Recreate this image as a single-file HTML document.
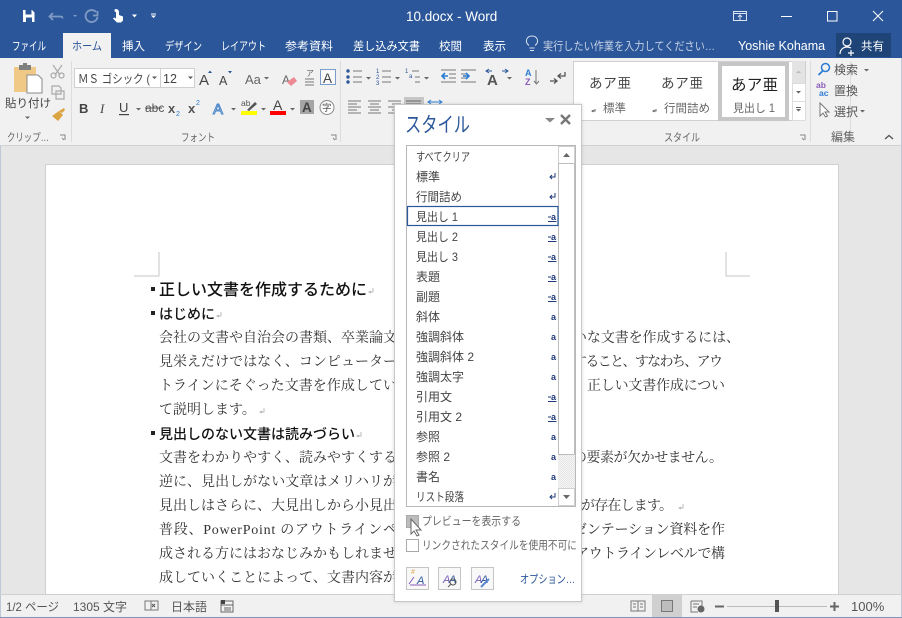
<!DOCTYPE html>
<html lang="ja"><head><meta charset="utf-8"><title>10.docx - Word</title>
<style>
html,body{margin:0;padding:0;width:902px;height:618px;overflow:hidden;background:#e6e6e6}
svg{display:block;font-family:"Liberation Sans","Noto Sans CJK JP",sans-serif}
.tab{font-size:11.5px;fill:#fff}
.r{font-size:12px;fill:#555}
.g{font-size:11px;fill:#666}
.d{font-size:14px;fill:#333;font-family:"Noto Serif CJK SC",serif}
.m{font-size:14px;fill:#333;font-family:"Liberation Serif","Noto Serif CJK SC",serif}
.h{font-size:14px;fill:#111;font-weight:700;font-family:"Noto Sans CJK JP",sans-serif}
.i{font-size:12px;fill:#444}
.s{font-size:12px;fill:#555}
</style></head><body>
<svg width="902" height="618" viewBox="0 0 902 618" xmlns="http://www.w3.org/2000/svg">
<defs>
<pattern id="hatch" width="2" height="2" patternUnits="userSpaceOnUse"><rect width="2" height="2" fill="#f6f6f6"/><rect width="1" height="1" fill="#e4e4e4"/><rect x="1" y="1" width="1" height="1" fill="#e4e4e4"/></pattern>
<filter id="sh" x="-10%" y="-10%" width="120%" height="120%"><feGaussianBlur stdDeviation="1.5"/></filter>
</defs>
<!-- title bar -->
<rect width="902" height="58" fill="#2b579a"/>
<g fill="none" stroke="#fff" stroke-width="1.4">
<path d="M23 10h9l2.500 2.500V22H23z" fill="#fff" stroke="none"/>
<rect x="25.500" y="10" width="6" height="4.500" fill="#2b579a" stroke="none"/>
<rect x="26" y="17.500" width="6" height="4.500" fill="#2b579a" stroke="none"/>
</g>
<g fill="none" stroke="#7f9ac4" stroke-width="1.800">
<path d="M53 13l-3.500 3.500 3.500 3.500M50 16.500h8c3 0 4.500-.5 4.500 2"/>
<path d="M97.500 11v4.500h-4.500M96 12a6 6 0 1 0 1.500 5"/>
</g>
<path d="M132 14.500h5l-2.500 3zM151 13.500h5v1h-5zM151 15.500h5l-2.500 2.500z" fill="#fff"/>
<path d="M73 15h4l-2 2z" fill="#7f9ac4"/>
<path d="M116 9a3 3 0 0 1 3 3v3l4 1.500v4l-2 2h-4l-4-4 1-1 2 1V12a1 1 0 0 1 0-3z" fill="#fff"/>
<text x="406" y="21" font-size="13.500" fill="#fff">10.docx - Word</text>
<g fill="none" stroke="#dbe3f0" stroke-width="1">
<rect x="733.500" y="11.500" width="13" height="9"/><path d="M733 13.500h14M740 20v-5M738 17l2-2 2 2"/>
<path d="M781 16.500h11" stroke="#fff"/>
<rect x="827.500" y="11.500" width="9.500" height="9.500" stroke="#fff"/>
<path d="M873 11l10 10M883 11l-10 10" stroke="#fff"/>
</g>
<!-- tabs -->
<rect x="63" y="33" width="48" height="26" fill="#f1f1f1"/>
<g lengthAdjust="spacingAndGlyphs">
<text class="tab" x="12" y="50" textLength="34" lengthAdjust="spacingAndGlyphs">ファイル</text>
<text class="tab" x="72" y="50" style="fill:#2b579a" textLength="30" lengthAdjust="spacingAndGlyphs">ホーム</text>
<text class="tab" x="122" y="50">挿入</text>
<text class="tab" x="165" y="50" textLength="37" lengthAdjust="spacingAndGlyphs">デザイン</text>
<text class="tab" x="221" y="50" textLength="45" lengthAdjust="spacingAndGlyphs">レイアウト</text>
<text class="tab" x="285" y="50" textLength="48" lengthAdjust="spacingAndGlyphs">参考資料</text>
<text class="tab" x="353" y="50" textLength="67" lengthAdjust="spacingAndGlyphs">差し込み文書</text>
<text class="tab" x="439" y="50">校閲</text>
<text class="tab" x="483" y="50">表示</text>
</g>
<path d="M530 50.500h4M529.500 48h5M529 45.500c-5-4-2-9.500 3-9.500s8 5.500 3 9.500" fill="none" stroke="#dbe3f0" stroke-width="1"/>
<text x="543" y="50" font-size="11.500" fill="#c4d0e4" textLength="172" lengthAdjust="spacingAndGlyphs">実行したい作業を入力してください…</text>
<text x="738" y="50" font-size="12.500" fill="#fff">Yoshie Kohama</text>
<rect x="836" y="33" width="55" height="24" fill="#1f4478"/>
<circle cx="847" cy="42" r="4" fill="none" stroke="#fff" stroke-width="1.200"/>
<path d="M840 54c0-4 3-7 7-7 2 0 3 .5 4 1M851 50v6M848 53h6" fill="none" stroke="#fff" stroke-width="1.200"/>
<text x="861" y="50" font-size="11.500" fill="#fff">共有</text>
<!-- ribbon -->
<rect x="0" y="58" width="902" height="88" fill="#f1f1f1"/>
<rect x="0" y="145" width="902" height="1" fill="#d2d2d2"/>
<rect x="0" y="146" width="902" height="448" fill="#e6e6e6"/>
<g fill="#dcdcdc"><rect x="71" y="61" width="1" height="81"/><rect x="340" y="61" width="1" height="81"/><rect x="810" y="61" width="1" height="81"/><rect x="850" y="61" width="1" height="81"/></g>
<!-- paste -->
<path d="M14 67h22v25H14z" fill="#f0c987"/>
<rect x="19" y="65" width="12" height="5" fill="#7f7f7f"/><rect x="23" y="63" width="4" height="3" fill="#7f7f7f"/>
<path d="M27 75h11l4 4v14H27z" fill="#fff" stroke="#8a8a8a"/>
<text x="5" y="107" font-size="11.500" fill="#444">貼り付け</text>
<path d="M25 116.500h5l-2.500 2.500z" fill="#666"/>
<g fill="none" stroke="#aaa" stroke-width="1.200"><path d="M53 65l7 10M62 65l-7 10"/><circle cx="53.500" cy="75.500" r="2.500"/><circle cx="61.500" cy="75.500" r="2.500"/>
<path d="M52 86h7l2 2v6h-9zM56 91h8v8h-8z"/></g>
<path d="M52 116l7-5 4 4-5 6zM59 111l5-3 1 2-3 3z" fill="#d9a441"/>
<text class="g" x="7" y="141" textLength="42" lengthAdjust="spacingAndGlyphs">クリップ…</text>
<path d="M60 135h5v5M62 138l2 2" fill="none" stroke="#888"/>
<text class="g" x="181" y="141" textLength="34" lengthAdjust="spacingAndGlyphs">フォント</text>
<path d="M331 135h5v5M333 138l2 2" fill="none" stroke="#888"/>
<text class="g" x="664" y="141" textLength="36" lengthAdjust="spacingAndGlyphs">スタイル</text>
<path d="M800 135h5v5M802 138l2 2" fill="none" stroke="#888"/>
<text class="g" x="831" y="141" style="font-size:12px">編集</text>
<path d="M885 139l4-3.500 4 3.500" fill="none" stroke="#555" stroke-width="1.400"/>
<!-- font row 1 -->
<rect x="74.500" y="68.500" width="86" height="19" fill="#fff" stroke="#d0d0d0"/>
<rect x="160.500" y="68.500" width="34" height="19" fill="#fff" stroke="#d0d0d0"/>
<text x="78" y="83" font-size="12" fill="#444" textLength="72" lengthAdjust="spacingAndGlyphs">ＭＳ ゴシック (</text>
<text x="163" y="83" font-size="12.500" fill="#444">12</text>
<path d="M152 76.500h5l-2.500 2.500zM188 76.500h5l-2.500 2.500z" fill="#555"/>
<text x="199" y="85" font-size="15" fill="#444">A</text>
<path d="M208 73h4l-2-2.500z" fill="#2b579a"/>
<text x="219" y="85" font-size="12.500" fill="#444">A</text>
<path d="M228 71h4l-2 2.500z" fill="#2b579a"/>
<text x="245" y="84" font-size="13" fill="#666">Aa</text>
<path d="M264 77h5l-2.500 2.500z" fill="#666"/>
<text x="282" y="84" font-size="12" fill="#666">A</text>
<path d="M287 82l7-5 3 4-6 5z" fill="#ee8a94"/>
<text x="306" y="76" font-size="8" fill="#666">ア</text>
<path d="M305 79h9M305 82h9M305 85h9" stroke="#777"/>
<rect x="320.500" y="69.500" width="15" height="15" fill="#f9f9f9" stroke="#7a9cc6"/>
<text x="323" y="83" font-size="13.500" fill="#444">A</text>
<!-- font row 2 -->
<text x="79" y="113" font-size="13" font-weight="700" fill="#444">B</text>
<text x="100" y="113" font-size="13" font-style="italic" font-family="Liberation Serif" fill="#444">I</text>
<text x="119" y="112" font-size="13" fill="#444">U</text><rect x="119" y="114" width="10" height="1.200" fill="#444"/>
<path d="M136 108h5l-2.500 2.500z" fill="#666"/>
<text x="145" y="112" font-size="12" fill="#555">abc</text><rect x="145" y="107.500" width="17" height="1" fill="#555"/>
<text x="168" y="113" font-size="13" font-weight="700" fill="#555">x</text><text x="176" y="116" font-size="7" fill="#2b7cd3">2</text>
<text x="188" y="113" font-size="13" font-weight="700" fill="#555">x</text><text x="196" y="105" font-size="7" fill="#2b7cd3">2</text>
<text x="213" y="114" font-size="15" fill="#fff" stroke="#4a86c8" stroke-width="1">A</text>
<path d="M231 108h5l-2.500 2.500z" fill="#666"/>
<text x="241" y="106" font-size="8.500" fill="#555">ab</text>
<path d="M247 110l8-8 2 2-8 7z" fill="#555"/>
<rect x="241" y="111" width="16" height="4" fill="#ffff00"/>
<path d="M261 108h5l-2.500 2.500z" fill="#666"/>
<text x="273" y="110" font-size="14" fill="#444">A</text>
<rect x="270" y="111" width="16" height="4" fill="#f00"/>
<path d="M290 108h5l-2.500 2.500z" fill="#666"/>
<rect x="300" y="100" width="14" height="14" fill="#a5a5a5"/>
<text x="302" y="112" font-size="13.500" font-weight="700" fill="#444">A</text>
<circle cx="327" cy="107.500" r="7" fill="#fbfbfb" stroke="#888"/>
<text x="322" y="111" font-size="9.500" fill="#555">字</text>
<!-- para row 1 -->
<g fill="#2b579a"><circle cx="348" cy="71" r="1.700"/><circle cx="348" cy="77" r="1.700"/><circle cx="348" cy="82" r="1.700"/></g>
<path d="M353 71h9M353 77h9M353 82h9M382 71h9M382 77h9M382 82h9M412 71h7M415 77h5M415 82h5M441 70h15M449 74h7M449 78h7M441 82h15M461 70h15M461 74h7M461 78h7M461 82h15" stroke="#777" fill="none"/>
<g font-size="6" fill="#2b579a"><text x="376" y="73">1</text><text x="376" y="79">2</text><text x="376" y="85">3</text><text x="405" y="73">1</text><text x="409" y="78">a</text></g>
<path d="M366 77h5l-2.500 2.500zM395 77h5l-2.500 2.500zM424 77h5l-2.500 2.500z" fill="#666"/>
<path d="M448 76h-6M445 73l-3 3 3 3M463 76h6M466 73l3 3-3 3" fill="none" stroke="#2b7cd3" stroke-width="1.600"/>
<text x="487" y="85" font-size="15" font-weight="700" fill="#555">A</text>
<path d="M487 71h5M507 71h-5M489 69l-3 2 3 2M505 69l3 2-3 2" fill="none" stroke="#2b579a"/>
<path d="M507 77h5l-2.500 2.500z" fill="#666"/>
<text x="525" y="76" font-size="9" font-weight="700" fill="#2b7cd3">A</text>
<text x="525" y="85" font-size="9" font-weight="700" fill="#8a5cb8">Z</text>
<path d="M536 70v14M534 81l2.500 3 2.500-3" fill="none" stroke="#777"/>
<path d="M565 72v4h-7M561 73.500l-3 2.500 3 2.500M550 81h7M554 78.500l3 2.500-3 2.500" fill="none" stroke="#555" stroke-width="1.300"/>
<!-- para row 2 -->
<path d="M348 101h13M348 104h9M348 107h13M348 110h9M348 113h13M368 101h13M370 104h9M368 107h13M370 110h9M368 113h13M388 101h13M392 104h9M388 107h13M392 110h9M388 113h13" stroke="#777"/>
<rect x="404" y="97" width="20" height="18" fill="#c6c6c6"/>
<path d="M406 101h15M406 104h15" stroke="#666"/>
<path d="M428 102h14M431 100l-3 2 3 2M439 100l3 2-3 2" fill="none" stroke="#2b7cd3"/>
<!-- styles gallery -->
<rect x="573.500" y="61.500" width="232" height="59" fill="#fff" stroke="#d0d0d0"/>
<rect x="720" y="64" width="67" height="55" fill="#fff" stroke="#c6c6c6" stroke-width="4"/>
<g fill="#444" font-size="13.500"><text x="589" y="88" textLength="42">あア亜</text><text x="661" y="88" textLength="42">あア亜</text></g>
<text x="731" y="90" font-size="15.500" fill="#222" textLength="47">あア亜</text>
<g font-size="11.500" fill="#666"><text x="603" y="112">標準</text><text x="664" y="112">行間詰め</text><text x="733" y="112" textLength="42" lengthAdjust="spacingAndGlyphs">見出し 1</text>
<path d="M595 109v2h-3M593.500 110l-1.500 1 1.500 1M656 109v2h-3M654.500 110l-1.500 1 1.500 1" fill="none" stroke="#666"/></g>
<rect x="792" y="61" width="13" height="22" fill="#e3e3e3"/>
<rect x="792.500" y="83.500" width="13" height="18" fill="#fff" stroke="#dcdcdc"/>
<rect x="792.500" y="101.500" width="13" height="19" fill="#fff" stroke="#dcdcdc"/>
<path d="M796 73l2.500-2.500 2.500 2.500z" fill="#bbb"/><path d="M796 91h5l-2.500 2.500zM796 109h5l-2.500 2.500z" fill="#666"/><rect x="796" y="107" width="5" height="1" fill="#666"/>
<!-- edit -->
<circle cx="825.500" cy="67.500" r="4" fill="none" stroke="#2b7cd3" stroke-width="1.500"/><path d="M822.500 71l-4 4" stroke="#2b7cd3" stroke-width="1.800"/>
<text x="834" y="74" font-size="12" fill="#555">検索</text><path d="M864 69h5l-2.500 2.500z" fill="#666"/>
<text x="816" y="88" font-size="8.500" font-weight="700" fill="#8a5cb8">ab</text><text x="819" y="96" font-size="8.500" font-weight="700" fill="#2b7cd3">ac</text>
<text x="834" y="95" font-size="12" fill="#555">置換</text>
<path d="M820 103v13l3-3 2.500 4 2-1-2.500-4h4z" fill="#fff" stroke="#777"/>
<text x="834" y="116" font-size="12" fill="#555">選択</text><path d="M860 110h5l-2.500 2.500z" fill="#666"/>
<!-- document page -->
<rect x="45.500" y="164.500" width="793" height="440" fill="#fff" stroke="#d0d0d0"/>
<path d="M159 252v24h-25M726 252v24h24" fill="none" stroke="#c6c6c6"/>
<g fill="#222"><rect x="151" y="287" width="4" height="4"/><rect x="151" y="311" width="4" height="4"/><rect x="151" y="431" width="4" height="4"/></g>
<text x="159" y="295" font-size="16" font-weight="500" fill="#111" font-family="Noto Sans CJK JP" textLength="208">正しい文書を作成するために</text>
<text class="h" x="159" y="319" style="font-weight:500" textLength="56">はじめに</text>
<text class="h" x="159" y="439" style="font-weight:500" textLength="196">見出しのない文書は読みづらい</text>
<g fill="none" stroke="#bbb"><path d="M373 288v4h-4M371 291l-2 1 2 1M221 312v4h-4M219 315l-2 1 2 1M264 408v4h-4M262 411l-2 1 2 1M361 432v4h-4M359 435l-2 1 2 1M683 504v4h-4M681 507l-2 1 2 1"/></g>
<text class="d" x="159" y="342" textLength="238">会社の文書や自治会の書類、卒業論文</text>
<text class="d" x="159" y="366" textLength="238">見栄えだけではなく、コンピューター</text>
<text class="d" x="159" y="390" textLength="238">トラインにそぐった文書を作成してい</text>
<text class="d" x="159" y="414">て説明します。</text>
<text class="d" x="159" y="462" textLength="238">文書をわかりやすく、読みやすくする</text>
<text class="d" x="159" y="486" textLength="238">逆に、見出しがない文章はメリハリが</text>
<text class="d" x="159" y="510" textLength="238">見出しはさらに、大見出しから小見出</text>
<text class="d" x="159" y="534" textLength="238">普段、<tspan class="m">PowerPoint</tspan> のアウトラインペ</text>
<text class="d" x="159" y="558" textLength="238">成される方にはおなじみかもしれませ</text>
<text class="d" x="159" y="582" textLength="238">成していくことによって、文書内容が</text>
<text class="d" x="159" y="606" textLength="238">明確になります。たとえば、見出し</text>
<text class="d" x="573" y="342" textLength="167">いな文書を作成するには、</text>
<text class="d" x="573" y="366" textLength="150">すること、すなわち、アウ</text>
<text class="d" x="587" y="390" textLength="138">正しい文書作成につい</text>
<text class="d" x="573" y="462" textLength="150">の要素が欠かせません。</text>
<text class="d" x="581" y="510" textLength="92">が存在します。</text>
<text class="d" x="573" y="534" textLength="152">ゼンテーション資料を作</text>
<text class="d" x="575" y="558" textLength="150">アウトラインレベルで構</text>
<!-- side borders -->
<rect x="0" y="146" width="1" height="472" fill="#c0c8d8"/><rect x="901" y="58" width="1" height="560" fill="#c0c8d8"/>
<!-- status bar -->
<rect x="0" y="594" width="902" height="1" fill="#d0d0d0"/>
<rect x="1" y="595" width="900" height="22" fill="#f1f1f1"/>
<rect x="0" y="617" width="902" height="1" fill="#7f95bb"/>
<text class="s" x="6" y="611" textLength="53" lengthAdjust="spacingAndGlyphs">1/2 ページ</text>
<text class="s" x="73" y="611">1305 文字</text>
<path d="M145 601h6v9h-6zM151 601h7v9h-7" fill="none" stroke="#777"/><path d="M152 604l3 3M155 604l-3 3" stroke="#555"/>
<text class="s" x="171" y="611">日本語</text>
<path d="M221 601h12v11h-12zM221 605h12M224 608h7M224 610h7" fill="none" stroke="#666"/><rect x="221" y="600" width="4" height="4" fill="#444"/>
<path d="M631 601h14v10h-14zM638 601v10M633 604h3M633 607h3M640 604h3M640 607h3" fill="none" stroke="#777"/>
<rect x="652" y="595" width="30" height="22" fill="#d0d0d0"/>
<rect x="661.500" y="600.500" width="11" height="11" fill="#bdbdbd" stroke="#777"/>
<path d="M691 601h11v8M691 601v11h7M693 604h6M693 607h4" fill="none" stroke="#777"/><circle cx="701" cy="609" r="3.500" fill="#666"/>
<rect x="715" y="605.500" width="9" height="2" fill="#666"/>
<rect x="727" y="606" width="100" height="1" fill="#bbb"/>
<rect x="775" y="600" width="4" height="12" fill="#555"/>
<path d="M830 606.500h9M834.500 602v9" stroke="#666" stroke-width="2"/>
<text class="s" x="851" y="611" style="font-size:13px">100%</text>
<!-- style pane -->
<rect x="394" y="104" width="188" height="498" fill="#888" opacity=".35" filter="url(#sh)"/>
<rect x="394.500" y="104.500" width="187" height="497" fill="#fff" stroke="#c8c8c8"/>
<text x="405" y="132" font-size="21" fill="#2b579a" textLength="65" lengthAdjust="spacingAndGlyphs">スタイル</text>
<path d="M545 118h10l-5 4.500z" fill="#888"/>
<path d="M561 115l9 9M570 115l-9 9" stroke="#777" stroke-width="2.400"/>
<rect x="406.500" y="145.500" width="169" height="361" fill="#fff" stroke="#b8b8b8"/>
<rect x="558" y="146" width="17" height="360" fill="url(#hatch)"/>
<rect x="558.500" y="146.500" width="16" height="17" fill="#fff" stroke="#d0d0d0"/>
<rect x="558.500" y="163.500" width="16" height="291" fill="#fff" stroke="#bdbdbd"/>
<rect x="558.500" y="488.500" width="16" height="17" fill="#fff" stroke="#d0d0d0"/>
<path d="M563 157l3.500-4 3.500 4zM563 495l3.500 4 3.500-4z" fill="#666"/>
<rect x="407.500" y="206.500" width="150.500" height="19" fill="#fff" stroke="#2b579a" stroke-width="1.200"/>
<g>
<text class="i" x="416" y="161" textLength="54" lengthAdjust="spacingAndGlyphs">すべてクリア</text>
<text class="i" x="416" y="181">標準</text>
<text class="i" x="416" y="201" textLength="46" lengthAdjust="spacingAndGlyphs">行間詰め</text>
<text class="i" x="416" y="221" textLength="42" lengthAdjust="spacingAndGlyphs">見出し 1</text>
<text class="i" x="416" y="241" textLength="42" lengthAdjust="spacingAndGlyphs">見出し 2</text>
<text class="i" x="416" y="261" textLength="42" lengthAdjust="spacingAndGlyphs">見出し 3</text>
<text class="i" x="416" y="281">表題</text>
<text class="i" x="416" y="301">副題</text>
<text class="i" x="416" y="321">斜体</text>
<text class="i" x="416" y="341">強調斜体</text>
<text class="i" x="416" y="361">強調斜体 2</text>
<text class="i" x="416" y="381">強調太字</text>
<text class="i" x="416" y="401">引用文</text>
<text class="i" x="416" y="421">引用文 2</text>
<text class="i" x="416" y="441">参照</text>
<text class="i" x="416" y="461">参照 2</text>
<text class="i" x="416" y="481">書名</text>
<text class="i" x="416" y="501" textLength="48" lengthAdjust="spacingAndGlyphs">リスト段落</text>
</g>
<g fill="none" stroke="#1f3a7a" stroke-width="1"><path d="M555 173v4h-5M552 175l-2 2 2 2M555 193v4h-5M552 195l-2 2 2 2M555 493v4h-5M552 495l-2 2 2 2"/></g>
<g font-size="9" font-weight="700" fill="#1f3a7a">
<text x="551" y="220">a</text><text x="551" y="240">a</text><text x="551" y="260">a</text><text x="551" y="280">a</text><text x="551" y="300">a</text><text x="551" y="400">a</text><text x="551" y="420">a</text>
<text x="551" y="320">a</text><text x="551" y="340">a</text><text x="551" y="360">a</text><text x="551" y="380">a</text><text x="551" y="440">a</text><text x="551" y="460">a</text><text x="551" y="480">a</text>
</g>
<g fill="none" stroke="#1f3a7a"><path d="M548 221.500h8.500M548 241.500h8.500M548 261.500h8.500M548 281.500h8.500M548 301.500h8.500M548 401.500h8.500M548 421.500h8.500M548 217h3M548 237h3M548 257h3M548 277h3M548 297h3M548 397h3M548 417h3"/></g>
<!-- checkboxes -->
<rect x="406.500" y="515.500" width="12" height="12" fill="#bcbcbc" stroke="#aaa"/>
<rect x="406.500" y="539.500" width="12" height="12" fill="#fff" stroke="#aaa"/>
<text x="422" y="525" font-size="11.500" fill="#666" textLength="99" lengthAdjust="spacingAndGlyphs">プレビューを表示する</text>
<text x="422" y="549" font-size="11.500" fill="#666" textLength="155" lengthAdjust="spacingAndGlyphs">リンクされたスタイルを使用不可に</text>
<path d="M411 519v15l3-3 3 5 2-1-3-5h5z" fill="#fff" stroke="#666"/>
<!-- bottom buttons -->
<g fill="#f8f8f8" stroke="#c4c4c4"><rect x="406.500" y="567.500" width="22" height="22"/><rect x="438.500" y="567.500" width="22" height="22"/><rect x="471.500" y="567.500" width="22" height="22"/></g>
<text x="411" y="574" font-size="7" fill="#d4a84a">#</text>
<text x="417" y="584" font-size="11" font-style="italic" fill="#2b579a">A</text>
<path d="M409 584l5-7M410 585h16" stroke="#8a5cb8" fill="none"/>
<text x="443" y="583" font-size="11" font-style="italic" fill="#7a5cb8">A</text><text x="449" y="583" font-size="11" font-style="italic" fill="#2b579a">A</text>
<circle cx="453" cy="582" r="3" fill="none" stroke="#555"/><path d="M451 584l-3 3" stroke="#555"/>
<text x="475" y="583" font-size="11" font-style="italic" fill="#7a5cb8">A</text><text x="481" y="583" font-size="11" font-style="italic" fill="#2b579a">A</text>
<path d="M481 587l8-8" stroke="#5b8ad0" stroke-width="2"/>
<text x="520" y="583" font-size="11.500" fill="#2b579a" textLength="55" lengthAdjust="spacingAndGlyphs">オプション…</text>
</svg>
</body></html>
